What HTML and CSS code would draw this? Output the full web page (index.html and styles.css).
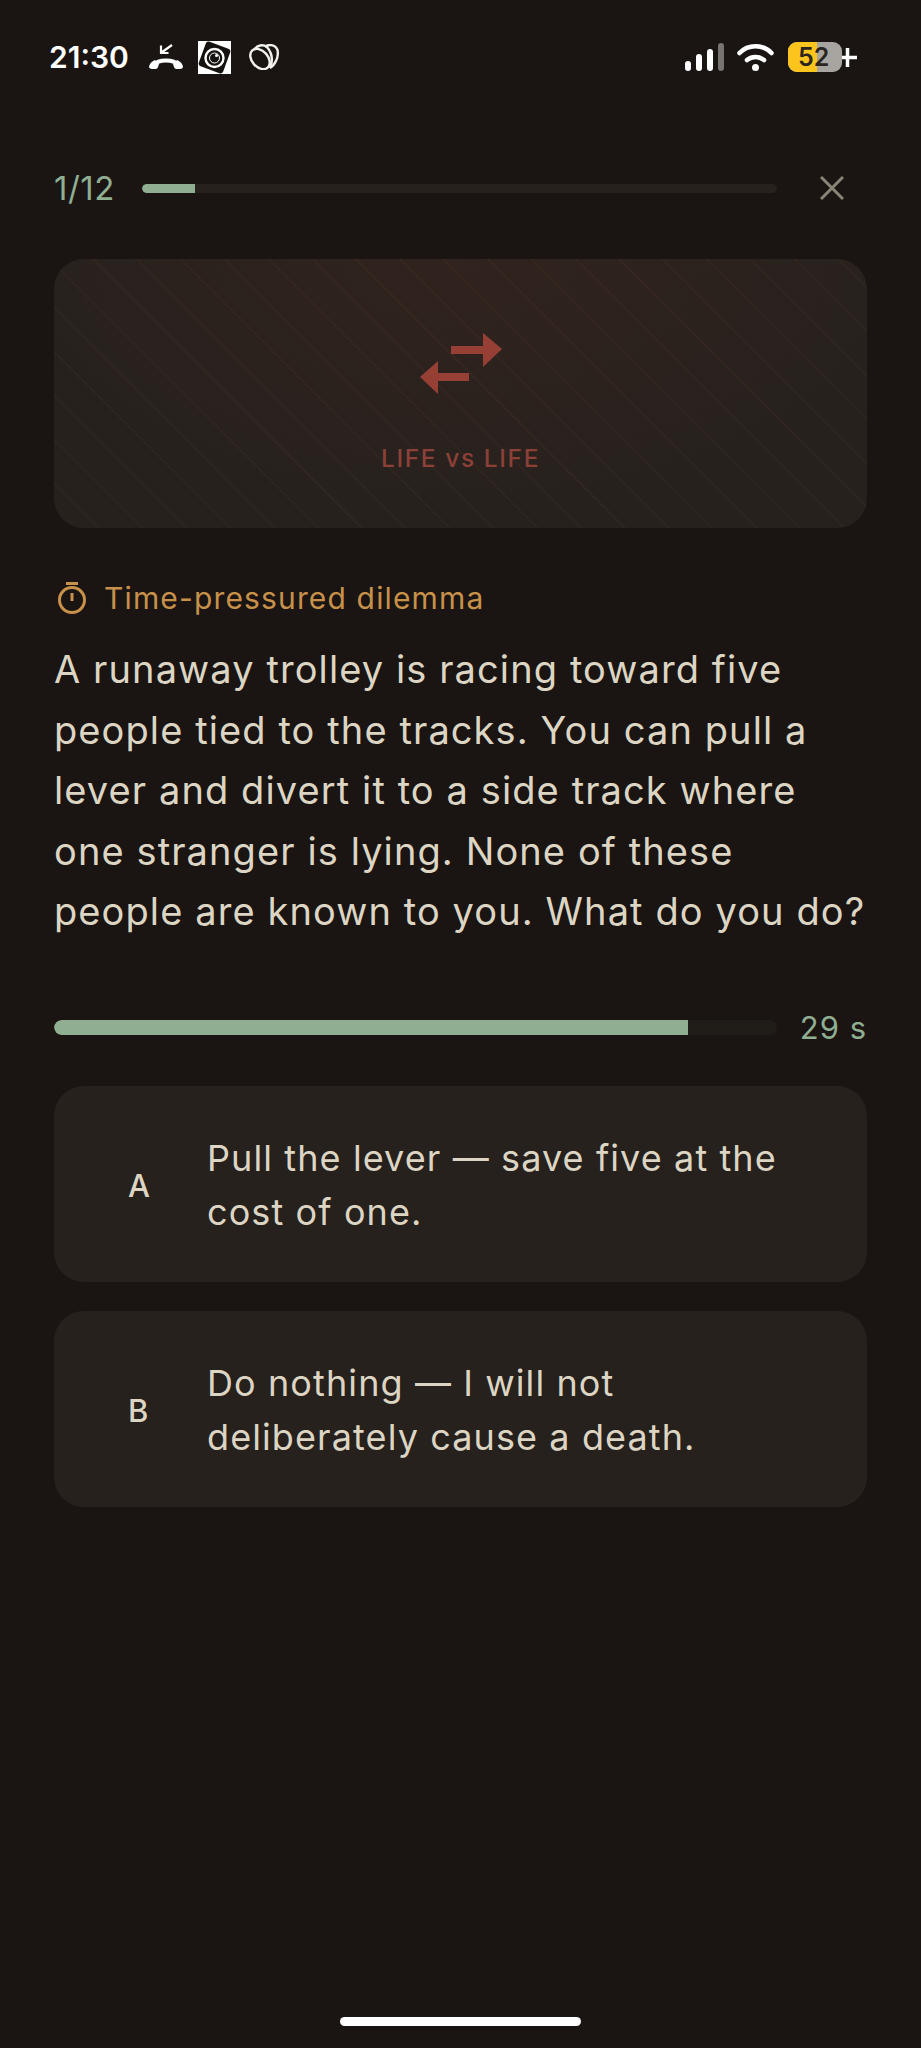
FILE: index.html
```html
<!DOCTYPE html>
<html lang="en">
<head>
  <meta charset="UTF-8">
  <meta name="viewport" content="width=device-width, initial-scale=1.0">
  <title>Dilemma</title>
  <link rel="stylesheet" href="styles.css">
</head>
<body class="app">
  <header class="status-bar">
    <div class="status-left">
      <span class="status-time">21:30</span>
      <svg class="icon-call" viewBox="0 0 34 26" width="34" height="26">
        <path d="M5 21C9 15 25 15 29 21" fill="none" stroke="#fff" stroke-width="4"/>
        <path d="M1 20c1-2 3-3 5-4l4 4-1 3c-.5 1.500-1.500 2-3 2H3c-2 0-3-1-3-2.500z" fill="#fff"/>
        <path d="M33 20c-1-2-3-3-5-4l-4 4 1 3c.5 1.500 1.500 2 3 2h3c2 0 3-1 3-2.500z" fill="#fff"/>
        <path d="M12 1.500v7.500h7.500M12.500 8.500L23 1" fill="none" stroke="#fff" stroke-width="2.200"/>
      </svg>
      <svg class="icon-lens" viewBox="0 0 33 33" width="33" height="33">
        <rect width="33" height="33" fill="#fff"/>
        <rect x="3.500" y="3.500" width="26" height="26" rx="3" transform="rotate(20 16.500 16.500)" fill="#15120f"/>
        <circle cx="16.500" cy="17" r="9" fill="none" stroke="#fff" stroke-width="2.400"/>
        <circle cx="16.500" cy="17" r="5" fill="none" stroke="#fff" stroke-width="1"/>
        <circle cx="18.500" cy="14.500" r="1.500" fill="#fff"/>
      </svg>
      <svg class="icon-petals" viewBox="0 0 31 26" width="31" height="26" fill="none" stroke="#f2f0ec" stroke-width="2.400">
        <ellipse cx="12" cy="15" rx="8" ry="11.500" transform="rotate(-42 12 15)"/>
        <path d="M6 6C9 1 15 0 19 3 24 9 25 17 22 24"/>
        <path d="M17 3C20 0 27 0 29.500 6 31 13 27 21 22 24"/>
      </svg>
    </div>
    <div class="status-right">
      <svg class="icon-signal" viewBox="0 0 39 28" width="39" height="28">
        <rect x="0" y="18" width="6" height="10" rx="3" fill="#fff"/>
        <rect x="11" y="11" width="6" height="17" rx="3" fill="#fff"/>
        <rect x="22" y="6" width="6" height="22" rx="3" fill="#fff"/>
        <rect x="33" y="0" width="6" height="28" rx="3" fill="#77736f"/>
      </svg>
      <svg class="icon-wifi" viewBox="0 0 37 28" width="37" height="28" fill="none" stroke="#fff" stroke-width="4.500" stroke-linecap="round">
        <path d="M2.500 10C11 1 26 1 34.500 10"/>
        <path d="M10 17c5-4 12-4 17 0"/>
        <circle cx="18.500" cy="24.500" r="3.500" fill="#fff" stroke="none"/>
      </svg>
      <div class="battery">
        <span class="battery-fill"></span>
        <span class="battery-text">52</span>
      </div>
      <svg class="battery-plus" viewBox="0 0 23 23" width="23" height="23">
        <path d="M11.500 2v19M2 11.500h19" stroke="#181410" stroke-width="7" fill="none"/>
        <path d="M11.500 2v19M2 11.500h19" stroke="#fff" stroke-width="3.500" fill="none"/>
      </svg>
    </div>
  </header>

  <main class="quiz">
    <div class="quiz-top">
      <span class="quiz-count">1/12</span>
      <div class="track track-top"><div class="fill" style="width: 8.300%"></div></div>
      <svg class="icon-close" viewBox="0 0 24 24" width="24" height="24" fill="none" stroke="#8a8474" stroke-width="3">
        <path d="M1 1l22 22M23 1L1 23"/>
      </svg>
    </div>

    <section class="hero">
      <svg class="icon-swap" viewBox="0 0 82 61" width="82" height="61">
        <path d="M31 13h32V0l19 16-19 18V21H31z" fill="#963f35"/>
        <path d="M49 48H18v13L0 44l18-16v12h31z" fill="#963f35"/>
      </svg>
      <span class="hero-label">LIFE vs LIFE</span>
    </section>

    <div class="tag">
      <svg class="icon-timer" viewBox="0 0 30 34" width="30" height="34" fill="none" stroke="#c8914a" stroke-width="3">
        <path d="M9 2.500h12"/>
        <circle cx="15" cy="19" r="12.500"/>
        <path d="M15 12v8"/>
      </svg>
      <span>Time-pressured dilemma</span>
    </div>

    <p class="question">A runaway trolley is racing toward five people tied to the tracks. You can pull a lever and divert it to a side track where one stranger is lying. None of these people are known to you. What do you do?</p>

    <div class="timer">
      <div class="track track-timer"><div class="fill" style="width: 87.700%"></div></div>
      <span class="timer-text">29 s</span>
    </div>

    <div class="options">
      <button class="option">
        <span class="option-key">A</span>
        <span class="option-text">Pull the lever — save five at the cost of one.</span>
      </button>
      <button class="option">
        <span class="option-key">B</span>
        <span class="option-text">Do nothing — I will not deliberately cause a death.</span>
      </button>
    </div>
  </main>

  <div class="home-bar"></div>
</body>
</html>
```

FILE: styles.css
```css
* {
  margin: 0;
  padding: 0;
  box-sizing: border-box;
}

.app {
  display: flex;
  flex-direction: column;
  height: 2048px;
  background: #1a1512;
  font-family: Inter, "Liberation Sans", sans-serif;
  overflow: hidden;
}

.status-bar {
  display: flex;
  justify-content: space-between;
  align-items: center;
  height: 34px;
  margin-top: 40px;
  padding: 0 64px 0 49px;
  color: #fff;
}

.status-left,
.status-right {
  display: flex;
  align-items: center;
}

.status-time {
  font-size: 30px;
  font-weight: 600;
  margin-right: 20px;
}

.icon-lens {
  margin: 0 17px 0 15px;
}

.icon-wifi {
  margin: 0 14px 0 13px;
}

.battery {
  position: relative;
  width: 54px;
  height: 30px;
  border-radius: 9px;
  background: #a8a5a0;
  overflow: hidden;
}

.battery-fill {
  display: block;
  width: 29px;
  height: 100%;
  background: #fbc51e;
}

.battery-text {
  position: absolute;
  top: 0;
  left: 10px;
  font-size: 25px;
  line-height: 30px;
  font-weight: 600;
  color: #2a261f;
}

.battery-plus {
  margin-left: -6px;
  margin-right: -2px;
}

.quiz {
  display: flex;
  flex-direction: column;
  padding: 0 54px;
}

.quiz-top {
  display: flex;
  align-items: center;
  margin-top: 97px;
  height: 34px;
}

.quiz-count {
  width: 88px;
  font-size: 33px;
  letter-spacing: .5px;
  color: #8fae92;
}

.track {
  background: #26211d;
  border-radius: 8px;
  overflow: hidden;
}

.fill {
  height: 100%;
  background: #8fae92;
  border-radius: 8px 0 0 8px;
}

.track-top {
  width: 635px;
  height: 9px;
}

.icon-close {
  margin-left: 43px;
}

.hero {
  display: flex;
  flex-direction: column;
  align-items: center;
  height: 269px;
  margin-top: 54px;
  padding-top: 74px;
  border-radius: 30px;
  background:
    repeating-linear-gradient(45deg, rgba(120, 70, 50, .11) 0 1.500px, transparent 1.500px 31px),
    radial-gradient(ellipse 60% 100% at 50% 0, #31231e, #26211d);
}

.hero-label {
  margin-top: 49px;
  font-size: 24.500px;
  font-weight: 500;
  letter-spacing: 1.600px;
  color: #8c4038;
}

.tag {
  display: flex;
  align-items: center;
  gap: 17px;
  margin-top: 53px;
  padding-left: 3px;
  height: 34px;
  font-size: 30px;
  letter-spacing: 1.150px;
  color: #c8914a;
}

.question {
  margin-top: 24px;
  font-size: 38px;
  line-height: 60.600px;
  letter-spacing: 1.100px;
  color: #ddd5c4;
}

.timer {
  display: flex;
  align-items: center;
  justify-content: space-between;
  margin-top: 69px;
  height: 34px;
}

.track-timer {
  width: 723px;
  height: 15px;
  background: #201c18;
}

.timer-text {
  font-size: 31px;
  letter-spacing: 1px;
  color: #8fae92;
}

.options {
  display: flex;
  flex-direction: column;
  gap: 29px;
  margin-top: 41px;
}

.option {
  display: flex;
  align-items: center;
  height: 196px;
  padding: 3px 72px 0 74px;
  border: none;
  border-radius: 30px;
  background: #26211d;
  font-family: inherit;
  text-align: left;
  color: #ddd5c4;
}

.option-key {
  flex: none;
  width: 79px;
  font-size: 31px;
  font-weight: 500;
}

.option-text {
  font-size: 36px;
  line-height: 54px;
  letter-spacing: 1.100px;
}

.home-bar {
  width: 241px;
  height: 9px;
  margin: auto auto 22px;
  border-radius: 5px;
  background: #fff;
}
```
